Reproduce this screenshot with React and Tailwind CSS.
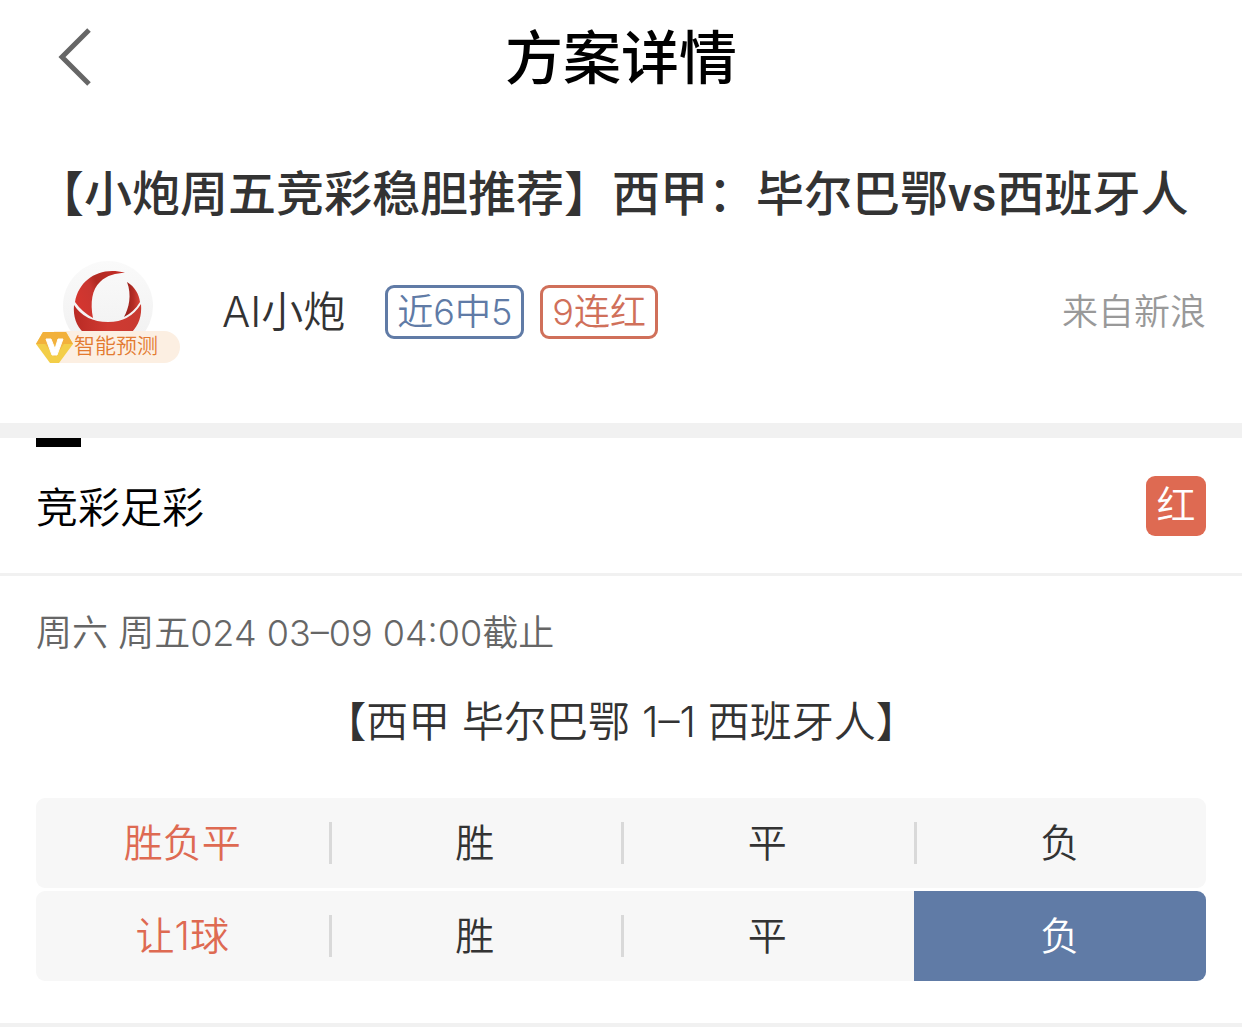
const odds = [
  { label: '胜负平', options: ['胜', '平', '负'], picked: null },
  { label: '让1球', options: ['胜', '平', '负'], picked: 2 },
]

function BackIcon() {
  return (
    <svg className="w-[36px] h-[60px]" viewBox="0 0 36 60" fill="none" aria-hidden="true">
      <path d="M32 3 L5 30 L32 57" stroke="#666" strokeWidth="5" />
    </svg>
  )
}

function Avatar() {
  return (
    <svg className="mx-auto w-[90px] h-[90px]" viewBox="0 0 90 90" aria-hidden="true">
      <defs>
        <linearGradient id="disc" x1="0" y1="0" x2="0" y2="1">
          <stop offset="0" stopColor="#fafafa" />
          <stop offset="1" stopColor="#f0f0f0" />
        </linearGradient>
        <linearGradient id="leafLeft" x1="0" y1="0.6" x2="1" y2="0.2">
          <stop offset="0" stopColor="#d5362f" />
          <stop offset="0.35" stopColor="#c93630" />
          <stop offset="0.5" stopColor="#b02a22" />
          <stop offset="1" stopColor="#c42c26" />
        </linearGradient>
        <linearGradient id="leafRight" x1="0" y1="0" x2="1" y2="0">
          <stop offset="0" stopColor="#8f1d18" />
          <stop offset="0.6" stopColor="#b52d25" />
          <stop offset="1" stopColor="#d8453a" />
        </linearGradient>
        <linearGradient id="bowl" x1="0" y1="0" x2="1" y2="0">
          <stop offset="0" stopColor="#b92a24" />
          <stop offset="0.5" stopColor="#cf3a32" />
          <stop offset="1" stopColor="#c93a31" />
        </linearGradient>
      </defs>
      <circle cx="45" cy="45" r="45" fill="url(#disc)" />
      <path d="M62 12 C38 5 16 18 12 41 Q19 51 30 57 C27 42 29 28 37 21 C44 14 53 12 62 12 Z" fill="url(#leafLeft)" />
      <path d="M64 21 C72 26 76 33 77 41 Q71 51 61 56 C66 47 69 34 64 21 Z" fill="url(#leafRight)" />
      <path d="M11 44 Q22 61 45 61 Q67 61 78 43 C79 55 76 64 68 72 L21 72 C13 65 10 55 11 44 Z" fill="url(#bowl)" />
    </svg>
  )
}

function GemIcon() {
  return (
    <svg className="relative w-[38px] h-[32px] shrink-0" viewBox="0 0 38 32" aria-hidden="true">
      <path d="M7 1 H30 L37 13 L23 32 H14 L0 13 Z" fill="#f3ce48" />
      <path d="M7 1 H30 L37 13 H0 Z" fill="#f2b13c" />
      <path d="M9 13 H28 L19 26 Z" fill="#f2b945" />
      <path d="M10 8 H15 L19 18 L22 8 H27 L21 24 H16 Z" fill="#fff" stroke="#fff" strokeLinejoin="round" />
    </svg>
  )
}

function Tag({ className, children }) {
  return (
    <span className={`h-[54px] px-[9px] border-3 rounded-[9px] text-[36px] leading-[48px] ${className}`}>
      {children}
    </span>
  )
}

function OddsRow({ label, options, picked }) {
  return (
    <tr className="h-[90px] text-[39px] leading-[42px] text-[#333]">
      <th scope="row" className="w-1/4 p-0 bg-[#f7f7f7] rounded-l-[9px] font-[350] text-[#de6a52]">
        {label}
      </th>
      {options.map((option, i) => (
        <td
          key={i}
          className={`w-1/4 p-0 text-center last:rounded-r-[9px] ${picked === i ? 'bg-[#607ba6] text-white' : 'bg-[#f7f7f7]'}`}
        >
          <div className={`border-l-3 pr-[3px] ${picked === i ? 'border-transparent' : 'border-[#d9d9d9]'}`}>{option}</div>
        </td>
      ))}
    </tr>
  )
}

export default function App() {
  return (
    <div className="min-h-screen bg-white font-[350] text-[#333] font-['Inter','Noto_Sans_CJK_SC',sans-serif]">
      <header className="grid grid-cols-[1fr_auto_1fr] items-center h-[114px] px-[57px]">
        <button type="button" aria-label="返回" className="justify-self-start">
          <BackIcon />
        </button>
        <h1 className="pt-0.5 text-[58px] leading-[84px] font-medium text-black">方案详情</h1>
      </header>

      <section className="px-9 pt-12 pb-[60px] border-b-15 border-[#f1f1f1]">
        <h2 className="text-[48px] leading-[66px] font-medium font-['Roboto','Noto_Sans_CJK_SC',sans-serif]">
          【小炮周五竞彩稳胆推荐】西甲：毕尔巴鄂vs西班牙人
        </h2>
        <div className="mt-[33px] flex items-center h-[102px]">
          <div className="relative w-[144px] h-[102px]">
            <Avatar />
            <div className="absolute inset-x-0 bottom-0 flex h-8">
              <GemIcon />
              <span className="flex-1 -ml-5 pl-5 rounded-r-full bg-[#fcefe2] text-[21px] leading-[30px] text-[#e37a30]">智能预测</span>
            </div>
          </div>
          <span className="ml-[42px] text-[42px] leading-[60px]">AI小炮</span>
          <div className="ml-10 flex gap-4">
            <Tag className="border-[#607ba6] text-[#607ba6]">近6中5</Tag>
            <Tag className="border-[#d0705a] text-[#d0705a]">9连红</Tag>
          </div>
          <span className="ml-auto text-[36px] leading-[54px] text-[#999]">来自新浪</span>
        </div>
      </section>

      <section className="border-b-3 border-[#f1f1f1]">
        <div className="ml-9 w-[45px] h-[9px] bg-black" />
        <div className="flex items-center justify-between h-[126px] px-9 pb-2">
          <h3 className="pt-1 text-[42px] leading-[60px] text-black">竞彩足彩</h3>
          <span className="w-[60px] h-[60px] rounded-[9px] bg-[#de6a52] text-center text-[39px] leading-[57px] text-white">红</span>
        </div>
      </section>

      <section className="px-9 pt-[30px] pb-[39px] border-b-4 border-[#f1f1f1]">
        <p className="text-[36px] leading-[54px] text-[#666]">周六 周五024 03–09 04:00截止</p>
        <p className="mt-8 text-center text-[42px] leading-[60px]">【西甲 毕尔巴鄂 1–1 西班牙人】</p>
        <table className="mt-[43px] w-full table-fixed border-separate border-spacing-x-0 border-spacing-y-[3px]">
          <tbody>
            {odds.map(row => (
              <OddsRow key={row.label} {...row} />
            ))}
          </tbody>
        </table>
      </section>
    </div>
  )
}
